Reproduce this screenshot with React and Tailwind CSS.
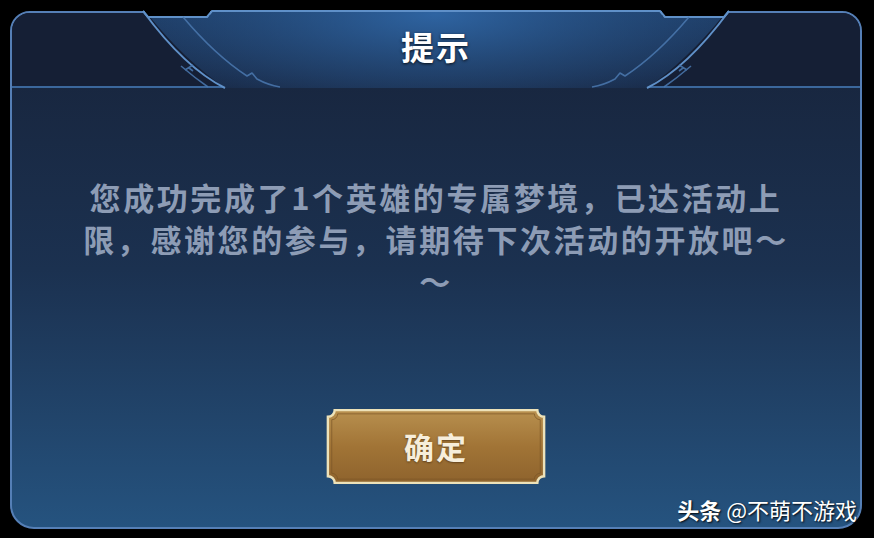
import React from "react";

const CJK = { fontFamily: '"Noto Sans CJK SC", "Noto Sans", sans-serif' };

// header ornament: notched top edge, curved side braces and the raised title tab
function HeaderFrame() {
  const tab =
    "M150 17 L207 17 L212 11 L660 11 L665 17 L722 17 Q687 60 647 88 L225 88 Q185 60 150 17 Z";
  return (
    <svg className="pointer-events-none absolute left-0 top-0" width="874" height="100" viewBox="0 0 874 100">
      <defs>
        <linearGradient id="tab" x1="0" y1="0" x2="0" y2="1">
          <stop offset="0" stopColor="#1f3f69" />
          <stop offset="1" stopColor="#1a2d4c" />
        </linearGradient>
        <radialGradient id="tabGlow" cx="436" cy="14" r="310" gradientUnits="userSpaceOnUse" gradientTransform="translate(436 14) scale(1 0.32) translate(-436 -14)">
          <stop offset="0" stopColor="#3068a8" stopOpacity="0.9" />
          <stop offset="0.6" stopColor="#2a5a92" stopOpacity="0.4" />
          <stop offset="1" stopColor="#2a5a92" stopOpacity="0" />
        </radialGradient>
      </defs>
      <path d={tab} fill="url(#tab)" />
      <path d={tab} fill="url(#tabGlow)" />
      {/* notches in the top edge */}
      <rect x="145" y="9" width="65" height="7" fill="#000" />
      <rect x="662" y="9" width="65" height="7" fill="#000" />
      <g fill="none" stroke="#5f90c8" strokeWidth="2" strokeLinejoin="round">
        <path d="M143 11 L148 17 L207 17 L212 11 L660 11 L665 17 L724 17 L729 11" />
        <path d="M143 11 Q185 68 225 88" />
        <path d="M729 11 Q687 68 647 88" />
      </g>
      <g fill="none" stroke="#4b79b0" strokeWidth="1.6" strokeLinejoin="round" opacity="0.85">
        <path d="M183 17 Q215 55 247 76 L252 73 L257 79 Q268 85 280 87" />
        <path d="M689 17 Q657 55 625 76 L620 73 L615 79 Q604 85 592 87" />
        <path d="M181 66 Q195 78 208 87" />
        <path d="M189 68 L193 71 M185 70 L193 65" />
        <path d="M691 66 Q677 78 664 87" />
        <path d="M683 68 L679 71 M687 70 L679 65" />
      </g>
    </svg>
  );
}

function ConfirmButton() {
  const shape = "M7 0 H215 A7 7 0 0 0 222 7 V68 A7 7 0 0 0 215 75 H7 A7 7 0 0 0 0 68 V7 A7 7 0 0 0 7 0 Z";
  return (
    <button className="relative h-[75px] w-[222px]">
      <svg className="absolute inset-0" width="222" height="75" viewBox="-1 -1 224 77">
        <defs>
          <linearGradient id="gold" x1="0" y1="0" x2="0" y2="1">
            <stop offset="0" stopColor="#b8904f" />
            <stop offset="0.5" stopColor="#a17436" />
            <stop offset="1" stopColor="#8e632d" />
          </linearGradient>
        </defs>
        <path d={shape} fill="url(#gold)" stroke="#ede2b9" strokeWidth="2.5" />
        <path
          d="M10 4 H212 A6 6 0 0 0 218 10 V65 A6 6 0 0 0 212 71 H10 A6 6 0 0 0 4 65 V10 A6 6 0 0 0 10 4 Z"
          fill="none"
          stroke="#7a5526"
          strokeWidth="1"
          opacity="0.7"
        />
      </svg>
      <span
        className="relative text-[30px] font-bold tracking-[2px] text-[#f7eedb] [text-shadow:0_1px_2px_rgba(60,35,10,0.6)]"
        style={CJK}
      >
        确定
      </span>
    </button>
  );
}

export default function App() {
  return (
    <div className="relative h-[538px] w-[874px] overflow-hidden bg-black pb-[9px] pl-[10px] pr-[12px] pt-[11px]" style={CJK}>
      <div className="flex h-full flex-col overflow-hidden rounded-b-[24px] rounded-t-[20px] border-2 border-[#557fb6] bg-gradient-to-b from-[#17233a] via-[#1b3150] to-[#25537f]">
        <div className="relative flex h-[75px] shrink-0 items-center justify-center border-b-2 border-[#3b679c] bg-[#151f35]" />
        <div className="flex flex-1 flex-col items-center pt-[88px]">
          <div className="text-center text-[31px] font-bold leading-[42px] tracking-[2.6px] text-[#8d9cb5]">
            <p>您成功完成了1个英雄的专属梦境，已达活动上</p>
            <p>限，感谢您的参与，请期待下次活动的开放吧～</p>
            <p>～</p>
          </div>
          <div className="mt-[107px]">
            <ConfirmButton />
          </div>
        </div>
      </div>
      <HeaderFrame />
      <div className="absolute left-0 top-[8px] flex h-[77px] w-[872px] items-center justify-center">
        <span className="text-[33px] font-bold tracking-[2px] text-white [text-shadow:0_1px_3px_rgba(0,0,0,0.8)]">提示</span>
      </div>
      <div className="absolute right-[17px] top-[493px] text-[22px] text-white [text-shadow:1px_1px_2px_rgba(0,0,0,0.9)]">
        <span className="font-bold">头条</span> @不萌不游戏
      </div>
    </div>
  );
}
